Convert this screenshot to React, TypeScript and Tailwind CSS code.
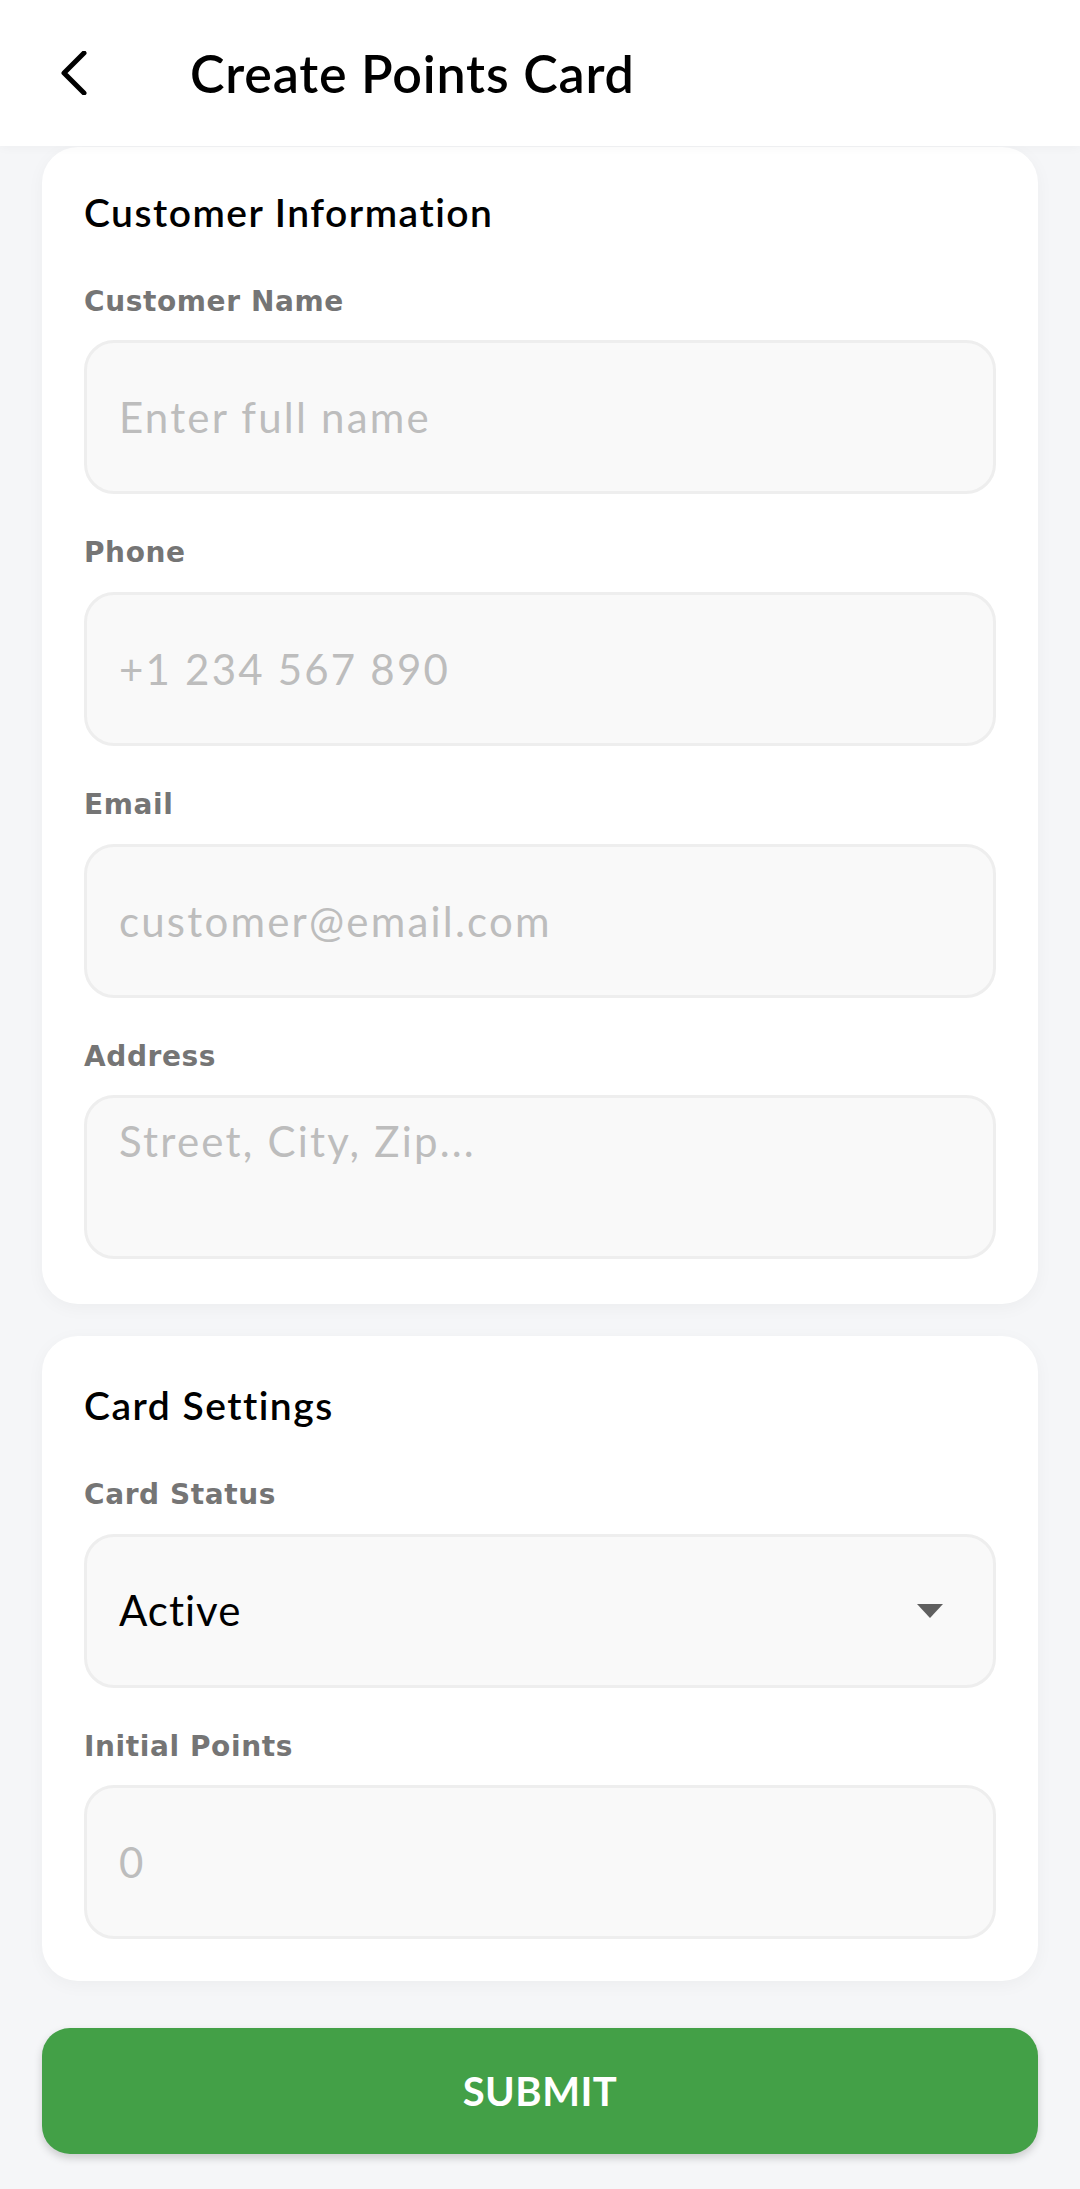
import React, { useState } from 'react';

type FieldProps = {
	label: string;
	placeholder: string;
	type?: string;
	last?: boolean;
};

const inputClass =
	"w-full rounded-[30px] border-[3px] border-[#eeeeee] bg-[#f9f9f9] px-[32px] text-[42px] leading-[1.2] tracking-[2.2px] text-black outline-none placeholder:text-[#bdbdbd] font-['Lato','Open_Sans',sans-serif]";

const Label = ({ text }: { text: string }) => (
	<div className="mb-[22px] font-['DejaVu_Sans','Lato',sans-serif] text-[28px] font-bold leading-[1.2] tracking-[0.6px] text-[#757575]">
		{text}
	</div>
);

const Field = ({ label, placeholder, type = 'text', last }: FieldProps) => {
	const [value, setValue] = useState('');
	return (
		<div className={last ? '' : 'mb-[42px]'}>
			<Label text={label} />
			<input
				type={type}
				value={value}
				placeholder={placeholder}
				onChange={(e) => setValue(e.target.value)}
				className={`${inputClass} h-[154px]`}
			/>
		</div>
	);
};

const Card = ({
	title,
	className,
	children,
}: {
	title: string;
	className: string;
	children: React.ReactNode;
}) => (
	<div className={`rounded-[36px] bg-white px-[42px] shadow-[0_4px_18px_rgba(0,0,0,0.04)] ${className}`}>
		<h2 className="mb-[49px] text-[39px] font-semibold leading-[1.2] tracking-[1.5px] text-black">{title}</h2>
		{children}
	</div>
);

const App = () => {
	const [address, setAddress] = useState('');
	const [status] = useState('Active');

	return (
		<div className="min-h-screen bg-[#f5f6f8] font-['Lato','Open_Sans',sans-serif]">
			<header className="relative z-10 flex h-[146px] items-center bg-white shadow-[0_2px_10px_rgba(0,0,0,0.03)]">
				<button className="ml-[52px] flex h-[60px] w-[44px] items-center justify-center">
					<svg width="32" height="44" viewBox="0 0 32 44" fill="none">
						<path
							d="M26 2 L6 22 L26 42"
							stroke="black"
							strokeWidth="5"
							strokeLinecap="round"
							strokeLinejoin="round"
						/>
					</svg>
				</button>
				<h1 className="ml-[94px] text-[52px] font-semibold leading-none tracking-[0.8px] text-black">
					Create Points Card
				</h1>
			</header>

			<main className="flex flex-col px-[42px] pt-[1px] pb-[35px]">
				<Card title="Customer Information" className="pt-[42px] pb-[45px]">
					<Field label="Customer Name" placeholder="Enter full name" />
					<Field label="Phone" placeholder="+1 234 567 890" type="tel" />
					<Field label="Email" placeholder="customer@email.com" type="email" />
					<div>
						<Label text="Address" />
						<textarea
							value={address}
							placeholder="Street, City, Zip..."
							onChange={(e) => setAddress(e.target.value)}
							className={`${inputClass} block h-[164px] resize-none pt-[18px]`}
						/>
					</div>
				</Card>

				<div className="mt-[32px]">
					<Card title="Card Settings" className="pt-[46px] pb-[42px]">
						<div className="mb-[42px]">
							<Label text="Card Status" />
							<div className="flex h-[154px] w-full items-center justify-between rounded-[30px] border-[3px] border-[#eeeeee] bg-[#f9f9f9] pl-[32px] pr-[50px]">
								<span className="text-[42px] leading-[1.2] tracking-[1px] text-black">{status}</span>
								<svg width="26" height="14" viewBox="0 0 26 14">
									<path d="M0 0 H26 L13 14 Z" fill="#5f5f5f" />
								</svg>
							</div>
						</div>
						<Field label="Initial Points" placeholder="0" type="number" last />
					</Card>
				</div>

				<button className="mt-[47px] h-[126px] w-full rounded-[28px] bg-[#43a047] text-[40px] font-bold tracking-[0.5px] text-white shadow-[0_4px_8px_rgba(0,0,0,0.18)]">
					SUBMIT
				</button>
			</main>
		</div>
	);
};

export default App;
